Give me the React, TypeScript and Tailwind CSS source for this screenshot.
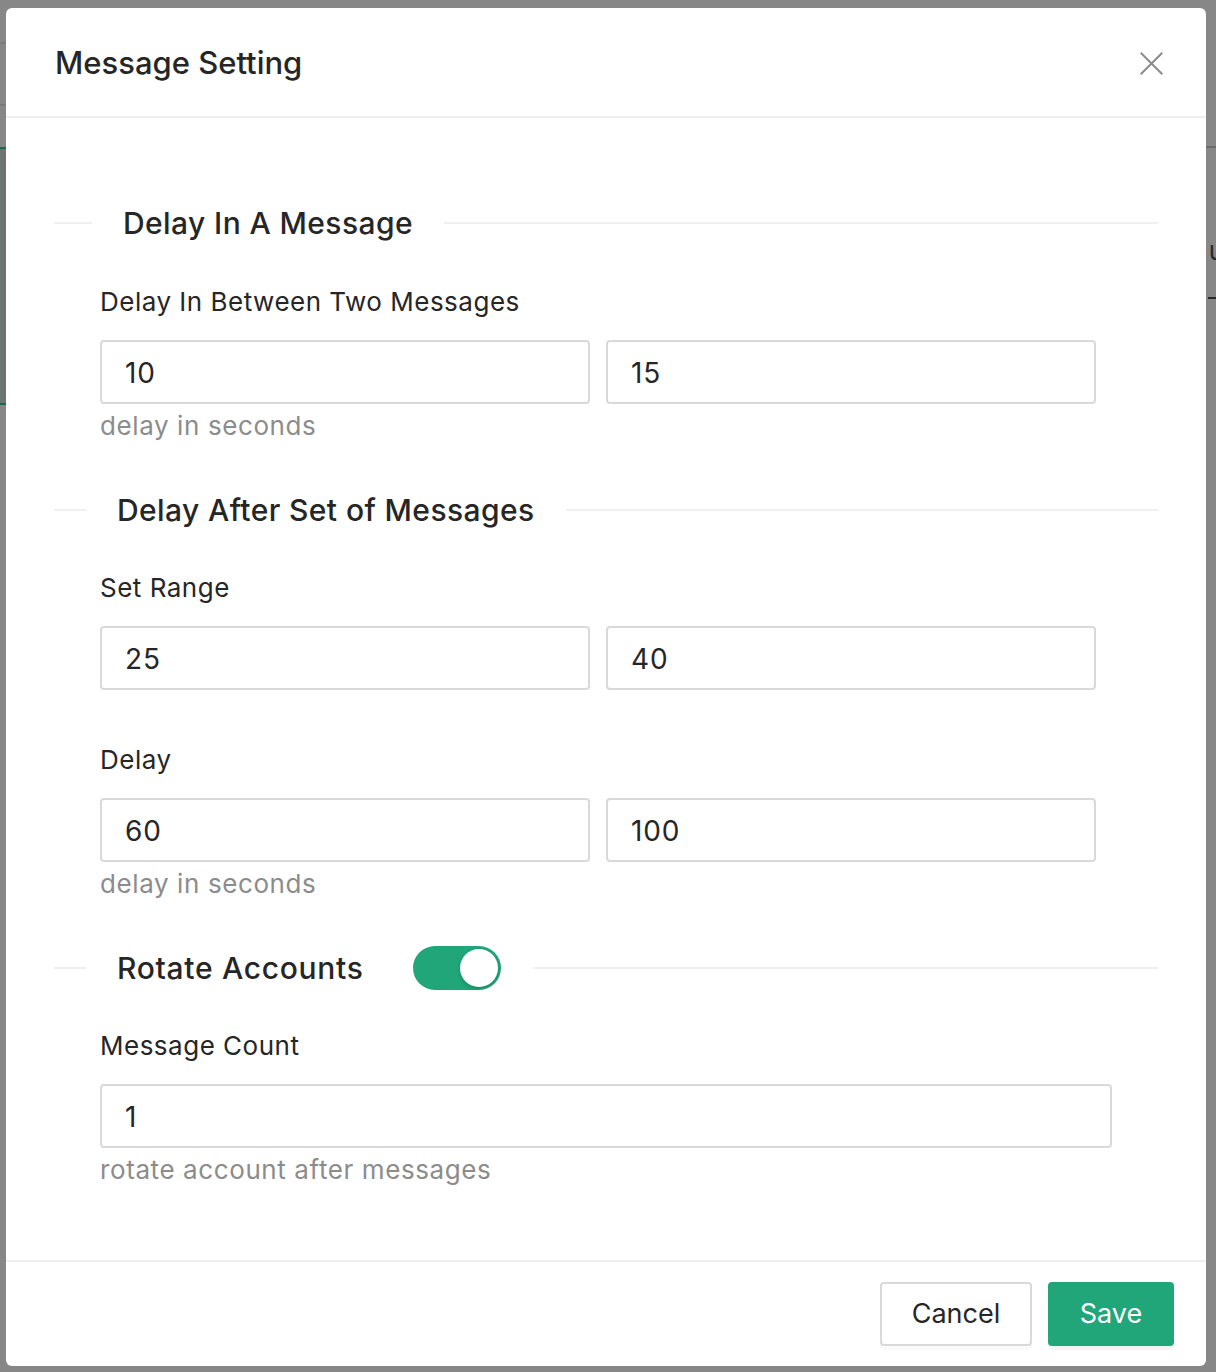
import React, { useState } from 'react';

const font = "font-['Inter','Noto_Sans',sans-serif]";

function SectionDivider({
  title,
  before,
  children,
  tall,
  wide,
}: {
  title: string;
  before: string;
  children?: React.ReactNode;
  tall?: boolean;
  wide?: boolean;
}) {
  return (
    <div className={`flex items-center ${tall ? 'h-[44px]' : 'h-[40px]'}`}>
      <div className={`h-[2px] shrink-0 bg-[#f0f0f0] ${before}`} />
      <span
        className={`shrink-0 px-[31px] text-[30px] leading-[40px] font-medium text-[#262626] ${wide ? 'tracking-[0.7px]' : 'tracking-[0.4px]'}`}
      >
        {title}
      </span>
      {children}
      <div className="h-[2px] flex-1 bg-[#f0f0f0]" />
    </div>
  );
}

function Field({ value }: { value: string }) {
  return (
    <div className="flex h-[64px] flex-1 items-center rounded-[4px] border-2 border-[#d9d9d9] bg-white pl-[23px] pt-[2px] text-[28px] tracking-[0.8px] text-[#262626]">
      {value}
    </div>
  );
}

function Label({ text, className = '' }: { text: string; className?: string }) {
  return (
    <div className={`ml-[46px] text-[26px] leading-[36px] tracking-[0.5px] text-[#262626] ${className}`}>{text}</div>
  );
}

function Helper({ text }: { text: string }) {
  return (
    <div className="ml-[46px] mt-[4px] text-[26px] leading-[36px] tracking-[0.6px] text-[#8c8c8c]">{text}</div>
  );
}

export default function App() {
  const [rotate, setRotate] = useState(true);

  return (
    <div className={`relative h-[1372px] w-full overflow-hidden bg-[#878787] ${font}`}>
      {/* page behind the overlay */}
      <div className="absolute left-0 top-[42px] h-[2px] w-[6px] bg-[#7b7b7b]" />
      <div className="absolute left-0 top-[104px] h-[2px] w-[6px] bg-[#7b7b7b]" />
      <div className="absolute left-0 top-[147px] h-[258px] w-[6px] border-y-2 border-[#1c6a4e] bg-[#6d7572]" />
      <div className="absolute right-0 top-[146px] h-[2px] w-[10px] bg-[#6c6c6c]" />
      <div className="absolute right-[-8px] top-[236px] text-[26px] leading-[30px] text-[#2a2a2a]">u</div>
      <div className="absolute right-0 top-[297px] h-[2px] w-[8px] bg-[#2a2a2a]" />

      <div className="relative pl-[6px] pt-[8px]">
        <div className="w-[1200px] rounded-[6px] bg-white">
          {/* Header */}
          <div className="flex h-[110px] items-center justify-between border-b-2 border-[#f0f0f0] pl-[49px] pr-[41px] pt-[2px]">
            <span className="text-[31px] font-medium text-[#262626]">Message Setting</span>
            <button className="flex h-[28px] w-[28px] items-center justify-center">
              <svg width="23" height="23" viewBox="0 0 24 24" fill="none" stroke="#8c8c8c" strokeWidth="2.1" strokeLinecap="square">
                <path d="M1.5 1.5 L22.5 22.5 M22.5 1.5 L1.5 22.5" />
              </svg>
            </button>
          </div>

          {/* Body */}
          <div className="px-[48px] pb-[72px] pt-[85px]">
            <SectionDivider title="Delay In A Message" before="w-[38px]" />
            <Label text="Delay In Between Two Messages" className="mt-[41px]" />
            <div className="ml-[46px] mt-[20px] flex w-[996px] gap-[16px]">
              <Field value="10" />
              <Field value="15" />
            </div>
            <Helper text="delay in seconds" />

            <div className="mt-[46px]">
              <SectionDivider title="Delay After Set of Messages" before="w-[32px]" />
            </div>
            <Label text="Set Range" className="mt-[40px]" />
            <div className="ml-[46px] mt-[20px] flex w-[996px] gap-[16px]">
              <Field value="25" />
              <Field value="40" />
            </div>
            <Label text="Delay" className="mt-[52px]" />
            <div className="ml-[46px] mt-[20px] flex w-[996px] gap-[16px]">
              <Field value="60" />
              <Field value="100" />
            </div>
            <Helper text="delay in seconds" />

            <div className="mt-[44px]">
              <SectionDivider title="Rotate Accounts" before="w-[32px]" tall wide>
                <button
                  onClick={() => setRotate(!rotate)}
                  className={`relative mr-[32px] ml-[18px] h-[44px] w-[88px] shrink-0 rounded-full ${rotate ? 'bg-[#21a67a]' : 'bg-[#bfbfbf]'}`}
                >
                  <span
                    className={`absolute top-[3px] h-[38px] w-[38px] rounded-full bg-white shadow-[0_2px_4px_rgba(0,35,11,0.2)] ${rotate ? 'right-[3px]' : 'left-[3px]'}`}
                  />
                </button>
              </SectionDivider>
            </div>
            <Label text="Message Count" className="mt-[38px]" />
            <div className="ml-[46px] mt-[20px] flex w-[1012px]">
              <Field value="1" />
            </div>
            <Helper text="rotate account after messages" />
          </div>

          {/* Footer */}
          <div className="flex justify-end gap-[16px] border-t-2 border-[#f0f0f0] pb-[20px] pr-[32px] pt-[20px]">
            <button className="h-[64px] w-[152px] rounded-[4px] border-2 border-[#d9d9d9] bg-white text-[27px] text-[#262626] shadow-[0_4px_0_rgba(0,0,0,0.02)]">
              Cancel
            </button>
            <button className="h-[64px] w-[126px] rounded-[4px] bg-[#21a67a] text-[27px] text-white shadow-[0_4px_0_rgba(0,0,0,0.045)]">
              Save
            </button>
          </div>
        </div>
      </div>
    </div>
  );
}
